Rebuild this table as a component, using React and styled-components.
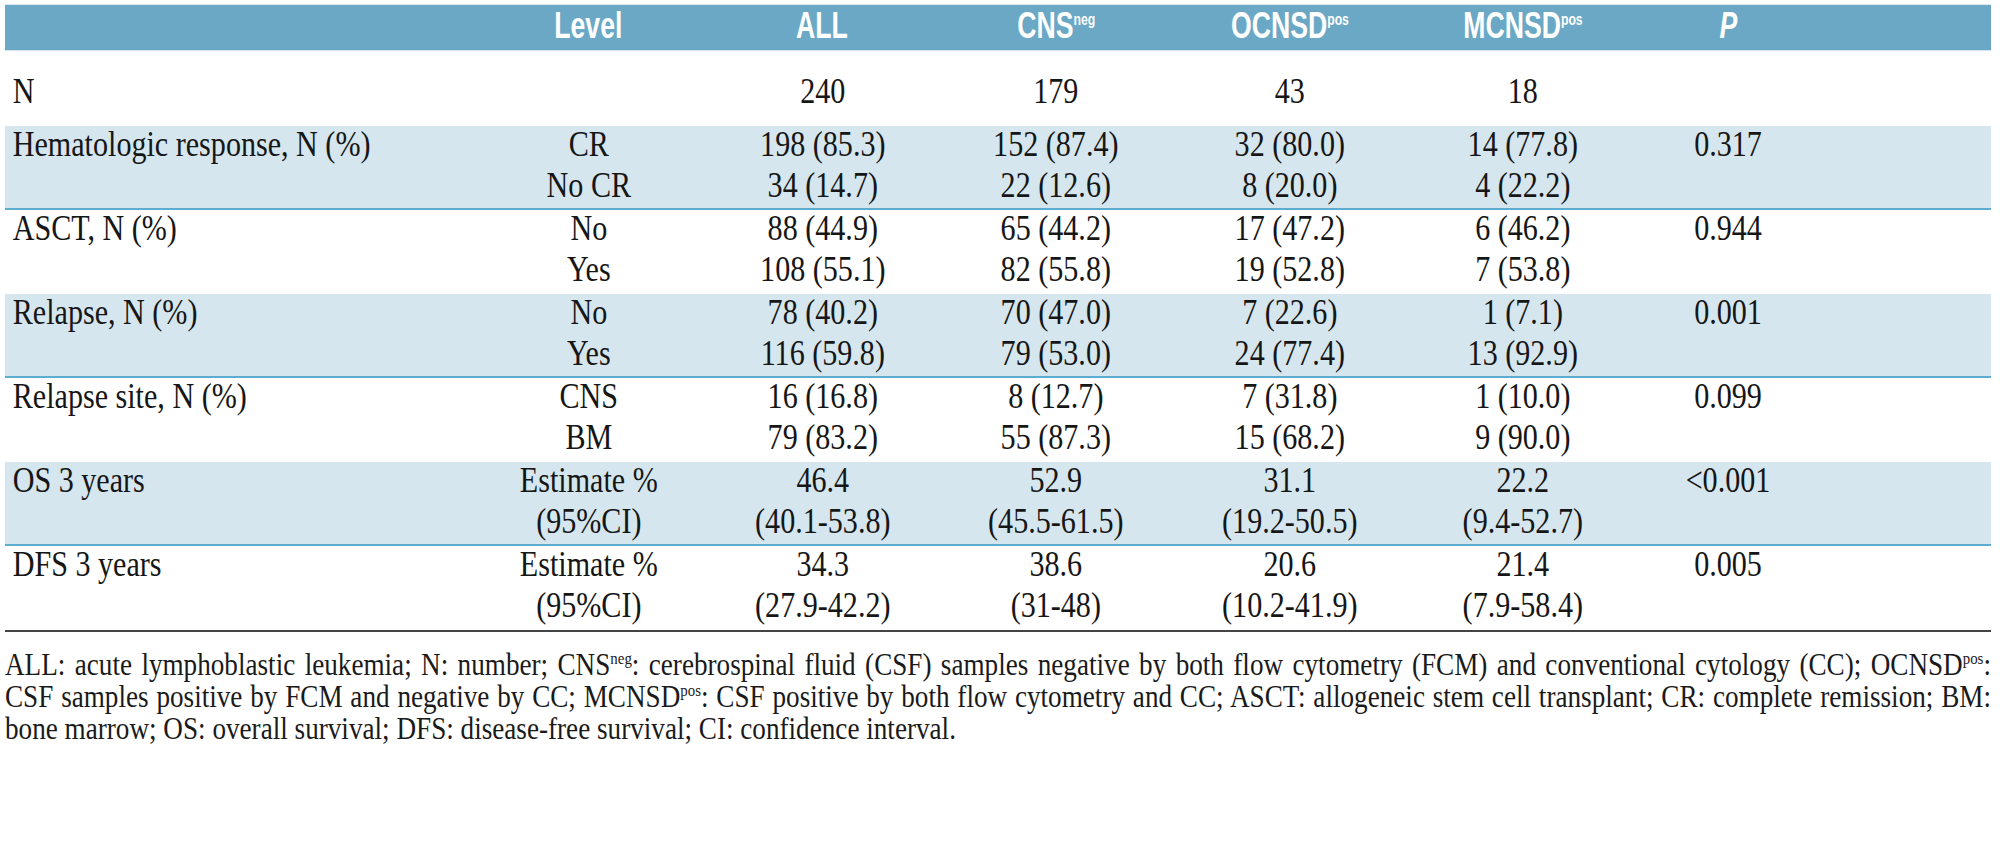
import React from "react";
import styled, { createGlobalStyle } from "styled-components";

const GlobalStyle = createGlobalStyle`
  html, body { margin: 0; padding: 0; background: #ffffff; overflow: hidden; }
  body { font-family: "Liberation Serif", "Times New Roman", serif; color: #161616; }
`;

const COLUMNS = "467px repeat(5, 233.6px) 176px 1fr";
const NOTE_SCALE = 0.876;

const Page = styled.div`
  padding: 4px 9px 0 5px;
`;

const Table = styled.div`
  width: 1986px;
`;

const HeaderBar = styled.div`
  display: grid;
  grid-template-columns: ${COLUMNS};
  height: 45px;
  background: #6aa8c5;
  border-top: 1px solid #dfe8ec;
  border-bottom: 1px solid #d3e3eb;
`;

const HeadCell = styled.div`
  display: flex;
  align-items: center;
  justify-content: center;
  padding-bottom: 3px;
  box-sizing: border-box;
`;

const HeadLabel = styled.span`
  display: inline-block;
  font-family: "Liberation Sans", Arial, sans-serif;
  font-weight: 700;
  font-size: 37px;
  line-height: 40px;
  color: #ffffff;
  white-space: nowrap;
  transform: scaleX(0.72);
  font-style: ${(p) => (p.$italic ? "italic" : "normal")};
`;

const HeadSup = styled.span`
  font-size: 17px;
  vertical-align: 13px;
  line-height: 0;
`;

const Group = styled.div`
  background: ${(p) => (p.$shaded ? "#d5e6ef" : "transparent")};
  border-bottom: 2px solid ${(p) => (p.$shaded ? "#5cadcf" : "transparent")};
`;

const Row = styled.div`
  display: grid;
  grid-template-columns: ${COLUMNS};
  height: 41px;
  line-height: 37px;
  font-size: 35px;
`;

const FirstRow = styled(Row)`
  height: 75px;
  padding-top: 22px;
  box-sizing: border-box;
`;

const Cell = styled.div`
  text-align: center;
  white-space: nowrap;
  transform: scaleX(0.86);
`;

const LabelCell = styled(Cell)`
  text-align: left;
  padding-left: 9px;
  transform-origin: left center;
`;

const Rule = styled.div`
  height: 2px;
  background: #444444;
`;

const Footnote = styled.div`
  margin-top: 17px;
  width: calc(1986px / ${NOTE_SCALE});
  transform: scaleX(${NOTE_SCALE});
  transform-origin: left top;
  font-size: 31px;
  line-height: 32px;
  color: #1a1a1a;
`;

const NoteLine = styled.span`
  display: block;
  text-align: justify;
  text-align-last: ${(p) => (p.$last ? "left" : "justify")};
  white-space: nowrap;
`;

const Sup = styled.span`
  font-size: 17px;
  vertical-align: 11px;
  line-height: 0;
`;

const headers = [
  { label: "Level" },
  { label: "ALL" },
  { label: "CNS", sup: "neg" },
  { label: "OCNSD", sup: "pos" },
  { label: "MCNSD", sup: "pos" },
  { label: "P", italic: true },
];

const groups = [
  {
    label: "Hematologic response, N (%)",
    shaded: true,
    p: "0.317",
    rows: [
      ["CR", "198 (85.3)", "152 (87.4)", "32 (80.0)", "14 (77.8)"],
      ["No CR", "34 (14.7)", "22 (12.6)", "8 (20.0)", "4 (22.2)"],
    ],
  },
  {
    label: "ASCT, N (%)",
    shaded: false,
    p: "0.944",
    rows: [
      ["No", "88 (44.9)", "65 (44.2)", "17 (47.2)", "6 (46.2)"],
      ["Yes", "108 (55.1)", "82 (55.8)", "19 (52.8)", "7 (53.8)"],
    ],
  },
  {
    label: "Relapse, N (%)",
    shaded: true,
    p: "0.001",
    rows: [
      ["No", "78 (40.2)", "70 (47.0)", "7 (22.6)", "1 (7.1)"],
      ["Yes", "116 (59.8)", "79 (53.0)", "24 (77.4)", "13 (92.9)"],
    ],
  },
  {
    label: "Relapse site, N (%)",
    shaded: false,
    p: "0.099",
    rows: [
      ["CNS", "16 (16.8)", "8 (12.7)", "7 (31.8)", "1 (10.0)"],
      ["BM", "79 (83.2)", "55 (87.3)", "15 (68.2)", "9 (90.0)"],
    ],
  },
  {
    label: "OS 3 years",
    shaded: true,
    p: "<0.001",
    rows: [
      ["Estimate %", "46.4", "52.9", "31.1", "22.2"],
      ["(95%CI)", "(40.1-53.8)", "(45.5-61.5)", "(19.2-50.5)", "(9.4-52.7)"],
    ],
  },
  {
    label: "DFS 3 years",
    shaded: false,
    p: "0.005",
    rows: [
      ["Estimate %", "34.3", "38.6", "20.6", "21.4"],
      ["(95%CI)", "(27.9-42.2)", "(31-48)", "(10.2-41.9)", "(7.9-58.4)"],
    ],
  },
];

export default function App() {
  return (
    <>
      <GlobalStyle />
      <Page>
        <Table>
          <HeaderBar>
            <HeadCell />
            {headers.map((h) => (
              <HeadCell key={h.label}>
                <HeadLabel $italic={h.italic}>
                  {h.label}
                  {h.sup && <HeadSup>{h.sup}</HeadSup>}
                </HeadLabel>
              </HeadCell>
            ))}
            <HeadCell />
          </HeaderBar>

          <FirstRow>
            <LabelCell>N</LabelCell>
            <Cell />
            <Cell>240</Cell>
            <Cell>179</Cell>
            <Cell>43</Cell>
            <Cell>18</Cell>
            <Cell />
            <Cell />
          </FirstRow>

          {groups.map((g) => (
            <Group key={g.label} $shaded={g.shaded}>
              {g.rows.map((r, i) => (
                <Row key={i}>
                  <LabelCell>{i === 0 ? g.label : ""}</LabelCell>
                  {r.map((v, j) => (
                    <Cell key={j}>{v}</Cell>
                  ))}
                  <Cell>{i === 0 ? g.p : ""}</Cell>
                  <Cell />
                </Row>
              ))}
            </Group>
          ))}

          <Rule />

          <Footnote>
            <NoteLine>
              ALL: acute lymphoblastic leukemia; N: number; CNS<Sup>neg</Sup>: cerebrospinal fluid (CSF) samples
              negative by both flow cytometry (FCM) and conventional cytology (CC); OCNSD<Sup>pos</Sup>:
            </NoteLine>
            <NoteLine>
              CSF samples positive by FCM and negative by CC; MCNSD<Sup>pos</Sup>: CSF positive by both flow
              cytometry and CC; ASCT: allogeneic stem cell transplant; CR: complete remission; BM:
            </NoteLine>
            <NoteLine $last>
              bone marrow; OS: overall survival; DFS: disease-free survival; CI: confidence interval.
            </NoteLine>
          </Footnote>
        </Table>
      </Page>
    </>
  );
}
